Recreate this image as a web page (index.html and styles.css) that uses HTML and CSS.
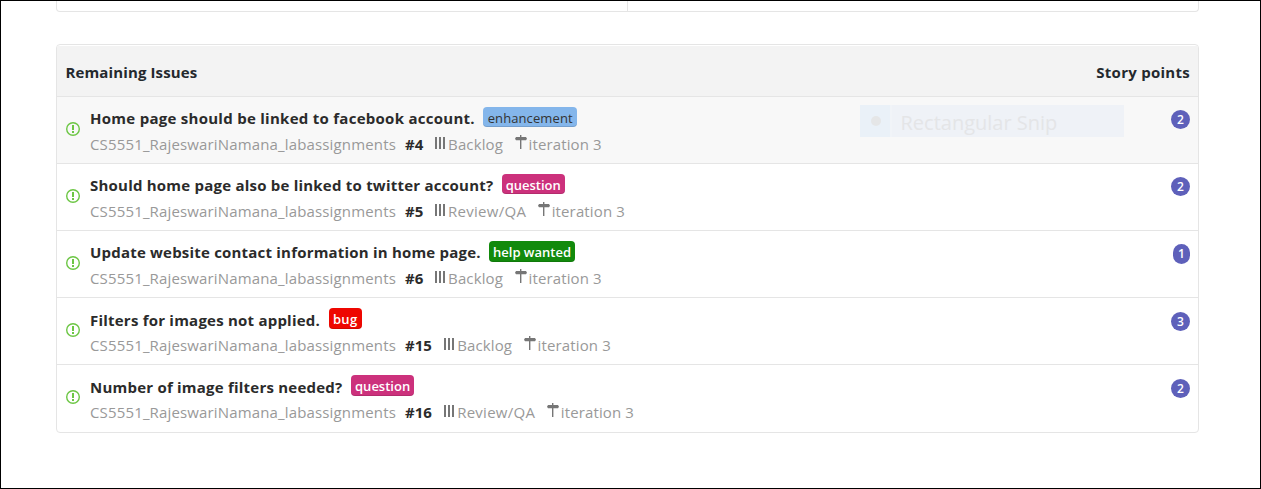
FILE: index.html
```html
<!DOCTYPE html>
<html lang="en">
<head>
<meta charset="utf-8">
<title>Remaining Issues</title>
<link rel="stylesheet" href="styles.css">
</head>
<body>
<svg class="defs" aria-hidden="true">
  <symbol id="open" viewBox="0 0 14 14"><circle cx="7" cy="7" r="6.3" fill="none" stroke="#6cc644" stroke-width="1.4"/><path d="M6 3h2v5H6zM6 9h2v2H6z" fill="#6cc644"/></symbol>
  <symbol id="bars" viewBox="0 0 11 12"><path d="M0 0h2v12H0zM4 0h2v12H4zM8 0h2v12H8z" fill="#767676"/></symbol>
  <symbol id="sign" viewBox="0 0 12 14"><path d="M5 0h1.4v2H11l1 1.7L11 5.2H6.4V14H5V5.2H1L0 3.7 1 2h4z" fill="#767676"/></symbol>
</svg>
<main class="page">
  <section class="summary"><div class="cell"></div><div class="cell"></div></section>
  <section class="panel">
    <header class="head"><span>Remaining Issues</span><span class="head-points">Story points</span></header>
    <article class="row hover">
      <svg class="state"><use href="#open"/></svg>
      <div class="body">
        <div class="title"><span class="name wide">Home page should be linked to facebook account.</span><span class="label enhancement">enhancement</span></div>
        <div class="meta"><span class="repo">CS5551_RajeswariNamana_labassignments</span><b>#4</b><svg class="bars"><use href="#bars"/></svg><span>Backlog</span><svg class="sign"><use href="#sign"/></svg><span>iteration 3</span></div>
      </div>
      <span class="points">2</span>
      <div class="snip"><i class="dot"></i><span>Rectangular Snip</span></div>
    </article>
    <article class="row">
      <svg class="state"><use href="#open"/></svg>
      <div class="body">
        <div class="title"><span class="name">Should home page also be linked to twitter account?</span><span class="label question">question</span></div>
        <div class="meta"><span class="repo">CS5551_RajeswariNamana_labassignments</span><b>#5</b><svg class="bars"><use href="#bars"/></svg><span class="review">Review/QA</span><svg class="sign"><use href="#sign"/></svg><span>iteration 3</span></div>
      </div>
      <span class="points">2</span>
    </article>
    <article class="row">
      <svg class="state"><use href="#open"/></svg>
      <div class="body">
        <div class="title"><span class="name tight">Update website contact information in home page.</span><span class="label tall help">help wanted</span></div>
        <div class="meta"><span class="repo">CS5551_RajeswariNamana_labassignments</span><b>#6</b><svg class="bars"><use href="#bars"/></svg><span>Backlog</span><svg class="sign"><use href="#sign"/></svg><span>iteration 3</span></div>
      </div>
      <span class="points one">1</span>
    </article>
    <article class="row low">
      <svg class="state"><use href="#open"/></svg>
      <div class="body">
        <div class="title"><span class="name">Filters for images not applied.</span><span class="label tall bug">bug</span></div>
        <div class="meta"><span class="repo">CS5551_RajeswariNamana_labassignments</span><b>#15</b><svg class="bars"><use href="#bars"/></svg><span>Backlog</span><svg class="sign"><use href="#sign"/></svg><span>iteration 3</span></div>
      </div>
      <span class="points">3</span>
    </article>
    <article class="row low last">
      <svg class="state"><use href="#open"/></svg>
      <div class="body">
        <div class="title"><span class="name">Number of image filters needed?</span><span class="label tall question">question</span></div>
        <div class="meta"><span class="repo">CS5551_RajeswariNamana_labassignments</span><b>#16</b><svg class="bars"><use href="#bars"/></svg><span class="review">Review/QA</span><svg class="sign"><use href="#sign"/></svg><span>iteration 3</span></div>
      </div>
      <span class="points">2</span>
    </article>
  </section>
</main>
</body>
</html>
```
FILE: styles.css
```css
* { box-sizing: border-box; }
body { margin: 0; background: #fff; font: 15px/20px "Open Sans", "Noto Sans", sans-serif; color: #2b2b2b; }
.defs { display: none; }
.page { width: 1261px; height: 489px; border: 1px solid #000; padding: 0 61px 0 55px; overflow: hidden; }
.summary { display: flex; height: 11px; border: 1px solid #e5e5e5; border-top: 0; border-radius: 0 0 4px 4px; }
.cell { flex: 1; }
.cell:first-child { flex: 0 0 571px; border-right: 1px solid #e5e5e5; }
.panel { margin-top: 32px; height: 389px; border: 1px solid #e5e5e5; border-radius: 4px; padding-top: 1px; }
.head { display: flex; justify-content: space-between; height: 51px; padding: 16px 8px 0 8.5px; background: #f3f3f3; border-bottom: 1px solid #e5e5e5; color: #24292e; font-weight: 700; letter-spacing: .12px; }
.head-points { letter-spacing: .27px; }
.row { position: relative; display: flex; align-items: flex-start; height: 67px; padding: 10px 8px 0 9px; border-bottom: 1px solid #e5e5e5; }
.hover { background: #f8f8f8; }
.last { border-bottom: 0; }
.state { flex: none; width: 14px; height: 14px; margin-top: 15px; }
.body { flex: 1; margin-left: 10px; }
.title { display: flex; height: 27px; }
.name { font-weight: 700; letter-spacing: .22px; line-height: 22px; white-space: nowrap; }
.wide { letter-spacing: .275px; }
.tight { letter-spacing: .2px; }
.label { height: 20px; margin-left: 8.3px; padding: 0 4px; border-radius: 4px; box-shadow: inset 0 -1px 0 rgba(0,0,0,.12); font-size: 13px; line-height: 22px; font-weight: 600; color: #fff; text-align: center; white-space: nowrap; }
.tall { height: 21px; }
.enhancement { width: 94px; background: #84b6eb; color: #333; font-weight: 400; letter-spacing: .1px; }
.question { width: 63px; background: #cc317c; }
.help { width: 86px; background: #128a0c; }
.bug { width: 33px; background: #ee0701; letter-spacing: .3px; }
.low .name { padding-top: 1px; }
.low .label { margin-left: 8.7px; }
.low .points { margin-top: 4px; }
.meta { display: flex; height: 20px; color: #999; letter-spacing: .13px; white-space: nowrap; }
.repo { flex: none; width: 315px; letter-spacing: .15px; }
.review { letter-spacing: .27px; }
.meta b { color: #2b2b2b; letter-spacing: 0; }
.bars { flex: none; width: 11px; height: 12px; margin: 3px 2px 0 11.8px; }
.sign { flex: none; width: 12px; height: 14px; margin: 1px 2px 0 11.5px; }
.low .bars { margin-left: 12.3px; }
.points { flex: none; width: 19px; height: 19px; margin-top: 3px; border-radius: 10px; background: #5e60ba; color: #fff; font-size: 12px; line-height: 20px; font-weight: 600; text-align: center; }
.one { width: 17px; height: 20px; }
/* Fading menu item left over the first row */
.snip { position: absolute; left: 803px; top: 8px; display: flex; width: 264px; height: 32px; background: linear-gradient(90deg, #eaf1f8 30px, #f1f4f8 30px, #f1f4f8 32px, #eff2f7 32px); color: #e4e5e7; font-size: 20px; line-height: 35px; white-space: nowrap; }
.dot { width: 10px; height: 10px; margin: 11px 14px 0 11px; border-radius: 50%; background: #e5e6e7; }
.snip span { margin-left: 5.5px; }
```
